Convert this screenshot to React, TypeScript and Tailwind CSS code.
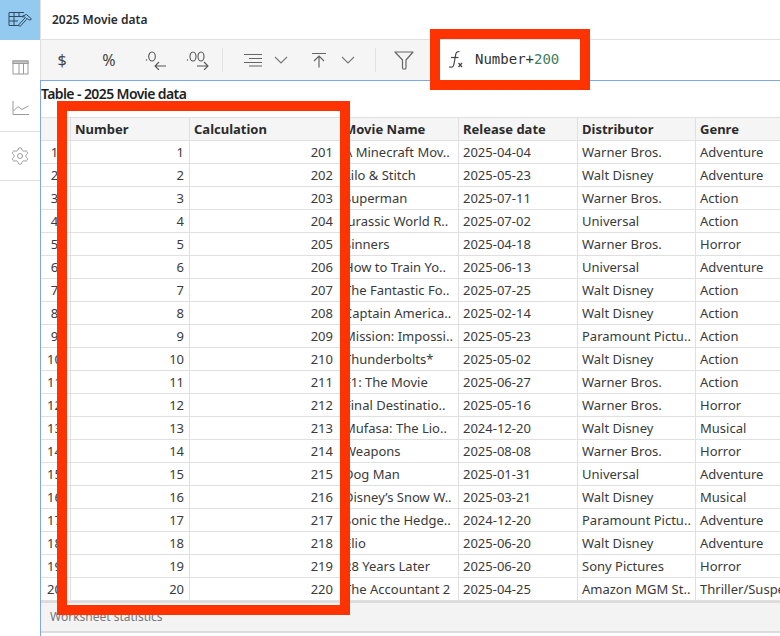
import React from "react";
import { Settings } from "lucide-react";

const rows: [string, string, string, string][] = [
  ["A Minecraft Mov..", "2025-04-04", "Warner Bros.", "Adventure"],
  ["Lilo & Stitch", "2025-05-23", "Walt Disney", "Adventure"],
  ["Superman", "2025-07-11", "Warner Bros.", "Action"],
  ["Jurassic World R..", "2025-07-02", "Universal", "Action"],
  ["Sinners", "2025-04-18", "Warner Bros.", "Horror"],
  ["How to Train Yo..", "2025-06-13", "Universal", "Adventure"],
  ["The Fantastic Fo..", "2025-07-25", "Walt Disney", "Action"],
  ["Captain America..", "2025-02-14", "Walt Disney", "Action"],
  ["Mission: Impossi..", "2025-05-23", "Paramount Pictu..", "Action"],
  ["Thunderbolts*", "2025-05-02", "Walt Disney", "Action"],
  ["F1: The Movie", "2025-06-27", "Warner Bros.", "Action"],
  ["Final Destinatio..", "2025-05-16", "Warner Bros.", "Horror"],
  ["Mufasa: The Lio..", "2024-12-20", "Walt Disney", "Musical"],
  ["Weapons", "2025-08-08", "Warner Bros.", "Horror"],
  ["Dog Man", "2025-01-31", "Universal", "Adventure"],
  ["Disney’s Snow W..", "2025-03-21", "Walt Disney", "Musical"],
  ["Sonic the Hedge..", "2024-12-20", "Paramount Pictu..", "Adventure"],
  ["Elio", "2025-06-20", "Walt Disney", "Adventure"],
  ["28 Years Later", "2025-06-20", "Sony Pictures", "Horror"],
  ["The Accountant 2", "2025-04-25", "Amazon MGM St..", "Thriller/Suspense"],
];

const gridCols = "grid grid-cols-[30px_119px_151px_118px_119px_118px_120px]";
const headBase =
  "h-[23px] bg-[#f5f5f5] border-r border-b border-[#e0e0e0] flex items-center font-bold text-[#2b2b2b] whitespace-nowrap overflow-hidden";
const headCell = headBase + " pl-[4px]";
const cell =
  "h-[23px] bg-white border-r border-b border-[#e0e0e0] flex items-center text-[#3a3a3a] whitespace-nowrap overflow-hidden";
const textCell = cell + " pl-[4px]";

function Chevron() {
  return (
    <svg width="14" height="8" viewBox="0 0 14 8" fill="none" stroke="#777" strokeWidth="1.1">
      <path d="M1 1l6 6 6-6" />
    </svg>
  );
}

function Sep() {
  return <div className="w-px h-6 bg-[#e2e2e2]" />;
}

export default function App() {
  return (
    <div className="relative w-[780px] h-[636px] overflow-hidden bg-white flex font-['Noto_Sans','Liberation_Sans',sans-serif] text-[13px] leading-none">
      {/* sidebar */}
      <div className="w-10 shrink-0 flex flex-col border-r border-[#e0e0e0] box-content -mr-px">
        <div className="h-10 w-10 bg-[#94c9f0] flex items-center justify-center">
          <svg width="24" height="18" viewBox="0 0 24 18" fill="none" stroke="#2f4a60" strokeWidth="1">
            <path d="M1 1.500h15M1 1.500v13h10M6 1.500v13M11 1.500v4M1 5.500h14M1 10h9" />
            <path d="M14.500 5l4-1.500 5 4.500-1.500 1.200-2.200-1.200-1.500-.3-1.800-2-2 .3z" fill="#94c9f0" />
            <path d="M17 7l-6.500 7 1.500 1.500 6.500-7" fill="#94c9f0" />
          </svg>
        </div>
        <div className="h-[92px] flex flex-col items-center border-b border-[#e0e0e0]">
          <svg className="mt-[20px]" width="17" height="15" viewBox="0 0 17 15" fill="none" stroke="#9a9a9a" strokeWidth="1">
            <rect x="1" y="1" width="15" height="13" />
            <path d="M1 3.500h15M7 3.500V14M11.500 3.500V14" />
            <rect x="1" y="1" width="15" height="2.500" fill="#c8c8c8" />
          </svg>
          <svg className="mt-[26px]" width="17" height="14" viewBox="0 0 17 14" fill="none" stroke="#9a9a9a" strokeWidth="1">
            <path d="M1 0v13.500h16M1.500 10l4.500-4.500 4 3 6.500-3.500" />
          </svg>
        </div>
        <div className="h-[49px] flex items-center justify-center border-b border-[#e0e0e0]">
          <Settings size={20} strokeWidth={1} color="#8a8a8a" />
        </div>
      </div>

      {/* main */}
      <div className="flex-1 min-w-0 flex flex-col">
        <div className="h-10 shrink-0 flex items-center pl-[11px] font-semibold text-[12px] text-[#2b2b2b] border-b border-[#e0e0e0] ml-px">
          2025 Movie data
        </div>

        <div className="h-10 shrink-0 flex items-center bg-[#f5f5f5] ml-px text-[#444]">
          <div className="w-[42px] text-center text-[16px]">$</div>
          <div className="w-[52px] text-center text-[16px]">%</div>
          <div className="w-[42px] flex justify-center">
            <svg width="24" height="20" viewBox="0 0 24 20" fill="none" stroke="#555" strokeWidth="1.100">
              <circle cx="2.500" cy="10" r=".7" fill="#555" stroke="none" />
              <ellipse cx="8" cy="6.500" rx="3.300" ry="4.500" />
              <path d="M22 16H11M15 12l-4 4 4 4" />
            </svg>
          </div>
          <div className="w-[42px] flex justify-center">
            <svg width="24" height="20" viewBox="0 0 24 20" fill="none" stroke="#555" strokeWidth="1.100">
              <circle cx="1.500" cy="10" r=".7" fill="#555" stroke="none" />
              <ellipse cx="7" cy="6.500" rx="3" ry="4.500" />
              <ellipse cx="15" cy="6.500" rx="3" ry="4.500" />
              <path d="M11 16h11M18 12l4 4-4 4" />
            </svg>
          </div>
          <div className="ml-[3px]">
            <Sep />
          </div>
          <div className="w-[44px] ml-[7px] flex justify-center">
            <svg width="19" height="14" viewBox="0 0 19 14" fill="none" stroke="#666" strokeWidth="1.200">
              <path d="M1 1.500h18M6 5.500h13M1 9.500h18M6 13h13" />
            </svg>
          </div>
          <Chevron />
          <div className="w-[44px] ml-[9px] flex justify-center">
            <svg width="16" height="16" viewBox="0 0 16 16" fill="none" stroke="#666" strokeWidth="1.200">
              <path d="M1 1.500h14M8 15.500V4M3 9l5-5 5 5" />
            </svg>
          </div>
          <Chevron />
          <div className="ml-[20px]">
            <Sep />
          </div>
          <div className="w-[56px] flex justify-center">
            <svg width="20" height="19" viewBox="0 0 20 19" fill="none" stroke="#666" strokeWidth="1.200" strokeLinejoin="round">
              <path d="M1 1h18l-7 8v8c0 1.500-3.500 1.500-3.500 0V9z" />
            </svg>
          </div>
          <div className="flex-1 self-stretch bg-white flex items-center pl-[15px]">
            <svg width="18" height="20" viewBox="0 0 18 20" fill="none" stroke="#444" strokeWidth="1.200">
              <path d="M12.500 1.500c-3 0-3.500 1-4 4L7 14c-.5 3-1.500 3.500-5 3" />
              <path d="M4 7.500h7.500" />
              <path d="M11.500 13l3.500 4M15 13l-3.500 4" />
            </svg>
            <span className="ml-[10px] mb-[2px] font-['DejaVu_Sans_Mono',monospace] text-[14px] text-[#333]">
              Number+<span className="text-[#3c8060]">200</span>
            </span>
          </div>
        </div>

        <div className="flex-1 min-h-0 border-t border-l border-[#7ea6e8] flex flex-col overflow-hidden">
          <div className="h-[36px] shrink-0 pt-[6px] font-semibold text-[14px] tracking-[-0.6px] text-[#1f1f1f] whitespace-nowrap">
            Table - 2025 Movie data
          </div>
          <div className={gridCols + " border-t border-[#e0e0e0] shrink-0"}>
            <div className={headCell} />
            <div className={headCell}>Number</div>
            <div className={headCell}>Calculation</div>
            <div className={headBase + " pl-[3px]"}>Movie Name</div>
            <div className={headCell}>Release date</div>
            <div className={headCell}>Distributor</div>
            <div className={headCell}>Genre</div>
            {rows.map((r, i) => (
              <React.Fragment key={i}>
                <div className={cell + " justify-center pr-[2px]"}>{i + 1}</div>
                <div className={cell + " justify-end pr-[5px]"}>{i + 1}</div>
                <div className={cell + " justify-end pr-[7px]"}>{i + 201}</div>
                <div className={cell + " pl-[3px]"}>{r[0]}</div>
                <div className={textCell}>{r[1]}</div>
                <div className={textCell}>{r[2]}</div>
                <div className={textCell}>{r[3]}</div>
              </React.Fragment>
            ))}
          </div>
          <div className="h-[32px] shrink-0 bg-[#f3f3f3] border-t-2 border-b-2 border-[#dcdcdc] flex items-center pl-[9px] text-[12px] text-[#777]">
            Worksheet statistics
          </div>
        </div>
      </div>

      {/* red annotation boxes */}
      <div className="absolute left-[57px] top-[101px] w-[293px] h-[514px] border-[10px] border-[#ff3300]" />
      <div className="absolute left-[430px] top-[29px] w-[160px] h-[61px] border-[10px] border-[#ff3300]" />
    </div>
  );
}
